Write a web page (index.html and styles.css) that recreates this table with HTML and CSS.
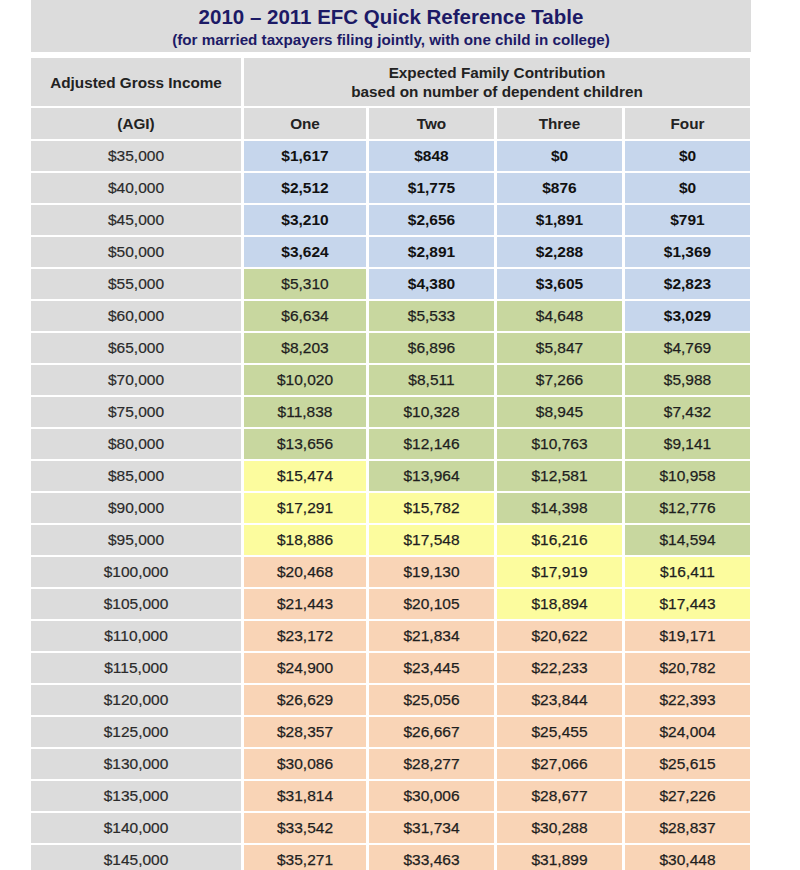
FILE: index.html
```html
<!DOCTYPE html>
<html>
<head>
<meta charset="utf-8">
<link rel="stylesheet" href="styles.css">
</head>
<body>
<div class="sheet">
  <div class="title-block">
    <div class="title">2010 – 2011 EFC Quick Reference Table</div>
    <div class="subtitle">(for married taxpayers filing jointly, with one child in college)</div>
  </div>
  <div class="grid">
    <div class="hd hd-tall">Adjusted Gross Income</div>
    <div class="hd hd-tall span4">Expected Family Contribution<br>based on number of dependent children</div>
    <div class="hd">(AGI)</div>
    <div class="hd">One</div>
    <div class="hd">Two</div>
    <div class="hd">Three</div>
    <div class="hd">Four</div>

    <div class="agi">$35,000</div><div class="c b">$1,617</div><div class="c b">$848</div><div class="c b">$0</div><div class="c b">$0</div>
    <div class="agi">$40,000</div><div class="c b">$2,512</div><div class="c b">$1,775</div><div class="c b">$876</div><div class="c b">$0</div>
    <div class="agi">$45,000</div><div class="c b">$3,210</div><div class="c b">$2,656</div><div class="c b">$1,891</div><div class="c b">$791</div>
    <div class="agi">$50,000</div><div class="c b">$3,624</div><div class="c b">$2,891</div><div class="c b">$2,288</div><div class="c b">$1,369</div>
    <div class="agi">$55,000</div><div class="c g">$5,310</div><div class="c b">$4,380</div><div class="c b">$3,605</div><div class="c b">$2,823</div>
    <div class="agi">$60,000</div><div class="c g">$6,634</div><div class="c g">$5,533</div><div class="c g">$4,648</div><div class="c b">$3,029</div>
    <div class="agi">$65,000</div><div class="c g">$8,203</div><div class="c g">$6,896</div><div class="c g">$5,847</div><div class="c g">$4,769</div>
    <div class="agi">$70,000</div><div class="c g">$10,020</div><div class="c g">$8,511</div><div class="c g">$7,266</div><div class="c g">$5,988</div>
    <div class="agi">$75,000</div><div class="c g">$11,838</div><div class="c g">$10,328</div><div class="c g">$8,945</div><div class="c g">$7,432</div>
    <div class="agi">$80,000</div><div class="c g">$13,656</div><div class="c g">$12,146</div><div class="c g">$10,763</div><div class="c g">$9,141</div>
    <div class="agi">$85,000</div><div class="c y">$15,474</div><div class="c g">$13,964</div><div class="c g">$12,581</div><div class="c g">$10,958</div>
    <div class="agi">$90,000</div><div class="c y">$17,291</div><div class="c y">$15,782</div><div class="c g">$14,398</div><div class="c g">$12,776</div>
    <div class="agi">$95,000</div><div class="c y">$18,886</div><div class="c y">$17,548</div><div class="c y">$16,216</div><div class="c g">$14,594</div>
    <div class="agi">$100,000</div><div class="c o">$20,468</div><div class="c o">$19,130</div><div class="c y">$17,919</div><div class="c y">$16,411</div>
    <div class="agi">$105,000</div><div class="c o">$21,443</div><div class="c o">$20,105</div><div class="c y">$18,894</div><div class="c y">$17,443</div>
    <div class="agi">$110,000</div><div class="c o">$23,172</div><div class="c o">$21,834</div><div class="c o">$20,622</div><div class="c o">$19,171</div>
    <div class="agi">$115,000</div><div class="c o">$24,900</div><div class="c o">$23,445</div><div class="c o">$22,233</div><div class="c o">$20,782</div>
    <div class="agi">$120,000</div><div class="c o">$26,629</div><div class="c o">$25,056</div><div class="c o">$23,844</div><div class="c o">$22,393</div>
    <div class="agi">$125,000</div><div class="c o">$28,357</div><div class="c o">$26,667</div><div class="c o">$25,455</div><div class="c o">$24,004</div>
    <div class="agi">$130,000</div><div class="c o">$30,086</div><div class="c o">$28,277</div><div class="c o">$27,066</div><div class="c o">$25,615</div>
    <div class="agi">$135,000</div><div class="c o">$31,814</div><div class="c o">$30,006</div><div class="c o">$28,677</div><div class="c o">$27,226</div>
    <div class="agi">$140,000</div><div class="c o">$33,542</div><div class="c o">$31,734</div><div class="c o">$30,288</div><div class="c o">$28,837</div>
    <div class="agi">$145,000</div><div class="c o">$35,271</div><div class="c o">$33,463</div><div class="c o">$31,899</div><div class="c o">$30,448</div>
  </div>
</div>
</body>
</html>
```

FILE: styles.css
```css
html, body {
  margin: 0;
  padding: 0;
  background: #ffffff;
  overflow: hidden;
}

body {
  font-family: "Liberation Sans", Arial, sans-serif;
  color: #222222;
}

.sheet {
  margin-left: 31px;
  width: 720px;
}

.title-block {
  background: #dcdcdc;
  height: 52px;
  display: flex;
  flex-direction: column;
  align-items: center;
  margin-bottom: 6px;
}

.title {
  font-size: 20.5px;
  font-weight: bold;
  color: #1c1a66;
  line-height: 24px;
  margin-top: 5px;
}

.subtitle {
  font-size: 15.2px;
  font-weight: bold;
  color: #1c1a66;
  line-height: 18px;
  margin-top: 2px;
}

.grid {
  display: grid;
  grid-template-columns: 210px 122px 125px 125px 125px;
  grid-template-rows: 48px 31px;
  grid-auto-rows: 30px;
  column-gap: 3px;
  row-gap: 2px;
}

.grid > div {
  display: flex;
  align-items: center;
  justify-content: center;
  text-align: center;
}

.hd {
  background: #dcdcdc;
  font-weight: bold;
  font-size: 15.3px;
  color: #222222;
  line-height: 19px;
}

.span4 {
  grid-column: span 4;
}

.agi {
  background: #dcdcdc;
  font-size: 15.5px;
  color: #2a2a2a;
  -webkit-text-stroke: 0.2px #2a2a2a;
}

.c {
  font-size: 15.5px;
  color: #1e1e1e;
  -webkit-text-stroke: 0.25px #1e1e1e;
}

.c.b {
  background: #c6d6ec;
  font-weight: bold;
  color: #111111;
  -webkit-text-stroke: 0;
}

.c.g {
  background: #c8d79f;
}

.c.y {
  background: #fcfc9e;
}

.c.o {
  background: #f9d4b6;
}
```
